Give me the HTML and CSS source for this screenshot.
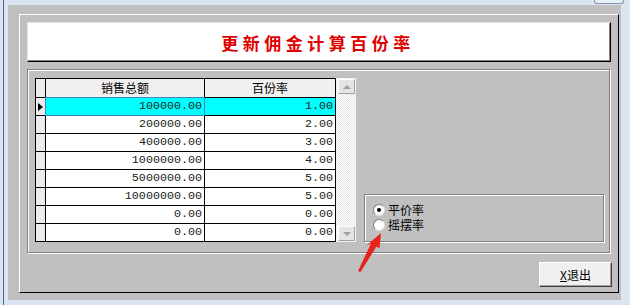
FILE: index.html
```html
<!DOCTYPE html>
<html>
<head>
<meta charset="utf-8">
<link rel="stylesheet" href="styles.css">
</head>
<body>
<div class="win">
  <div class="frame">
    <div class="chrome"><span class="capbtn"></span></div>
    <div class="client">
      <div class="panel">
        <div class="title">更新佣金计算百份率</div>
        <div class="group">
          <div class="grid">
            <div class="table">
              <div class="hd ind"></div><div class="hd">销售总额</div><div class="hd">百份率</div>
              <div class="ind"><span class="tri"></span></div><div class="cell sel focus">100000.00</div><div class="cell sel">1.00</div>
              <div class="ind"></div><div class="cell">200000.00</div><div class="cell">2.00</div>
              <div class="ind"></div><div class="cell">400000.00</div><div class="cell">3.00</div>
              <div class="ind"></div><div class="cell">1000000.00</div><div class="cell">4.00</div>
              <div class="ind"></div><div class="cell">5000000.00</div><div class="cell">5.00</div>
              <div class="ind"></div><div class="cell">10000000.00</div><div class="cell">5.00</div>
              <div class="ind"></div><div class="cell">0.00</div><div class="cell">0.00</div>
              <div class="ind"></div><div class="cell">0.00</div><div class="cell">0.00</div>
            </div>
            <div class="vscroll">
              <div class="sbtn"><span class="arr up"></span></div>
              <div class="track"></div>
              <div class="sbtn"><span class="arr down"></span></div>
            </div>
          </div>
          <div class="radios">
            <div class="opt"><span class="radio on"></span><span class="lbl">平价率</span></div>
            <div class="opt"><span class="radio"></span><span class="lbl">摇摆率</span></div>
          </div>
        </div>
        <div class="actions"><button class="btn"><u>X</u>退出</button></div>
      </div>
    </div>
  </div>
</div>
<svg class="arrow" width="630" height="305" viewBox="0 0 630 305">
  <polygon points="381,233 379.5,248.5 376.5,246.5 360.5,272 358,271 371,243.5 366.5,245.5" fill="#e8231d"/>
</svg>
</body>
</html>
```
FILE: styles.css
```css
* { box-sizing: border-box; }
html, body { margin: 0; }
body {
  width: 630px;
  height: 305px;
  background: #dae5f1;
  font: 12px "Noto Sans CJK SC", sans-serif;
  color: #000;
  overflow: hidden;
  position: relative;
}
.win { padding-left: 3px; height: 305px; }
.frame { border-left: 1px solid #55667a; padding-left: 4px; height: 305px; }
.chrome { height: 5px; display: flex; justify-content: flex-end; padding-right: 6px; }
.capbtn {
  width: 30px; height: 4px;
  border: 1px solid #8595a8; border-top: 0;
  border-radius: 0 0 3px 3px;
  background: #e8eef6;
}
.client { width: 613px; height: 295px; background: #c0c0c0; padding: 9px 0 0 11px; }
.panel {
  width: 600px; height: 279px;
  border: 1px solid; border-color: #fff #000 #000 #fff;
  padding: 7px 7px 0 7px;
  display: flex; flex-direction: column;
}
.title {
  height: 40px; flex: none;
  background: #fff;
  border: 1px solid; border-color: #e3e3e3 #000 #000 #e3e3e3;
  box-shadow: inset -1px -1px 0 #808080;
  display: flex; align-items: center; justify-content: center;
  color: #e00000;
  font-weight: bold; font-size: 17px; letter-spacing: 4.5px;
  padding-right: 2px;
}
.group {
  margin-top: 7px;
  width: 583px; height: 184px; flex: none;
  border: 1px solid #808080;
  box-shadow: 1px 1px 0 #fff, inset 1px 1px 0 #fff;
  padding: 8px 0 10px 7px;
  display: flex; align-items: flex-end;
}
.grid { display: flex; height: 164px; align-self: flex-start; }
.table {
  display: grid;
  grid-template-columns: 9px 158px 130px;
  grid-template-rows: 18px repeat(8, 17px);
  gap: 1px;
  background: #000;
  border: 1px solid #000;
}
.hd { background: #f0f0f0; text-align: center; line-height: 18px; }
.ind { background: #ececec; display: flex; align-items: center; padding-left: 2px; }
.tri { width: 0; height: 0; border-left: 5px solid #000; border-top: 4px solid transparent; border-bottom: 4px solid transparent; }
.cell {
  background: #fff;
  font: 11.7px "Liberation Mono", monospace;
  color: #222;
  text-align: right;
  line-height: 17px;
  padding-right: 2px;
}
.sel { background: #00ffff; }
.focus { outline: 1px solid #3b86c8; }
.vscroll {
  width: 20px; height: 164px;
  padding: 1px 1px 1px 2px;
  display: flex; flex-direction: column;
  background: repeating-conic-gradient(#fff 0 25%, #e6e6e6 0 50%) 0 0 / 2px 2px;
}
.sbtn {
  height: 15px; flex: none;
  background: #e4e4e4;
  border: 1px solid; border-color: #fff #a0a0a0 #a0a0a0 #fff;
  display: flex; align-items: center; justify-content: center;
}
.track { flex: 1; }
.arr { width: 0; height: 0; border-left: 4px solid transparent; border-right: 4px solid transparent; }
.arr.up { border-bottom: 4px solid #a0a0a0; }
.arr.down { border-top: 4px solid #a0a0a0; }
.radios {
  margin-left: 8px;
  width: 240px; height: 48px;
  border: 1px solid #808080;
  box-shadow: 1px 1px 0 #fff, inset 1px 1px 0 #fff;
  padding: 7px 0 0 8px;
}
.opt { display: flex; align-items: center; height: 15px; gap: 3px; line-height: 15px; }
.lbl { line-height: 15px; height: 15px; }
.radio {
  width: 12px; height: 12px; border-radius: 50%; flex: none;
  background: #fff;
  border: 1px solid; border-color: #808080 #e0e0e0 #e0e0e0 #808080;
  display: flex; align-items: center; justify-content: center;
}
.radio.on::after { content: ""; width: 4px; height: 4px; border-radius: 50%; background: #000; }
.actions { display: flex; justify-content: flex-end; margin-top: 9px; margin-right: -1px; }
.btn {
  width: 73px; height: 25px;
  background: #f0f0f0;
  border: 1px solid; border-color: #fff #404040 #404040 #fff;
  box-shadow: inset -1px -1px 0 #a0a0a0;
  font: 12px "Noto Sans CJK SC", sans-serif;
  color: #000;
  padding: 0;
}
.arrow { position: absolute; left: 0; top: 0; pointer-events: none; }
```
